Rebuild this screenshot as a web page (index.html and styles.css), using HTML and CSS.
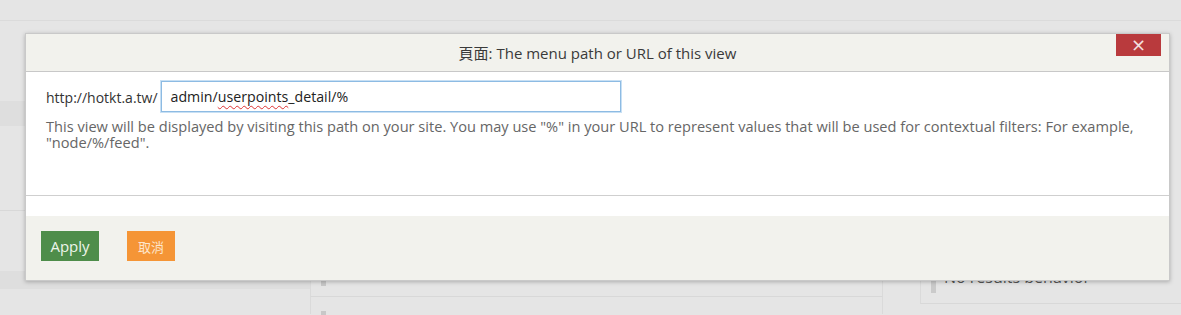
FILE: index.html
```html
<!DOCTYPE html>
<html lang="zh-Hant">
<head>
    <meta charset="UTF-8">
    <meta name="viewport" content="width=device-width, initial-scale=1.0">
    <title>Views UI</title>
    <link rel="stylesheet" href="styles.css">
</head>
<body>

<div class="page">
    <div class="page-top"></div>
    <div class="page-main">
        <div class="col-left">
            <div class="band band-1"></div>
            <div class="rule rule-1"></div>
            <div class="band band-2"></div>
        </div>
        <div class="col-mid">
            <div class="mid-row">
                <span class="handle"></span>
                <span class="mini-box"></span>
            </div>
            <div class="mid-row">
                <span class="handle"></span>
            </div>
        </div>
        <div class="col-gap"></div>
        <div class="col-right">
            <div class="right-row">
                <span class="bar"></span>
                <span class="right-title">No results behavior</span>
            </div>
        </div>
    </div>
</div>

<div class="dialog">
    <div class="dialog-header">
        <span class="dialog-title">頁面: The menu path or URL of this view</span>
        <button class="dialog-close" type="button">&times;</button>
    </div>
    <div class="dialog-content">
        <div class="form-row">
            <label class="field-prefix">http://hotkt.a.tw/</label>
            <div class="text-input">admin/<span class="misspelt">userpoints</span>_detail/%</div>
        </div>
        <p class="description">This view will be displayed by visiting this path on your site. You may use "%" in your URL to represent values that will be used for contextual filters: For example, "node/%/feed".</p>
    </div>
    <div class="dialog-spacer"></div>
    <div class="dialog-buttons">
        <button class="btn btn-apply" type="button">Apply</button>
        <button class="btn btn-cancel" type="button">取消</button>
    </div>
</div>

</body>
</html>
```

FILE: styles.css
```css
* {
    margin: 0;
    padding: 0;
    box-sizing: border-box;
}

html, body {
    height: 100%;
    overflow: hidden;
}

body {
    background-color: #e5e5e5;
    font-family: "Open Sans", "Noto Sans CJK TC", sans-serif;
    color: #333;
    position: relative;
}

/* page behind the dialog */
.page-top {
    height: 21px;
    border-bottom: 1px solid #dbdbdb;
}

.page-main {
    display: grid;
    grid-template-columns: 310px 573px 37px 1fr;
    height: 293px;
}

.col-left {
    padding-top: 80px;
}

.band {
    background-color: #dedede;
}

.band-1 {
    height: 25px;
}

.rule-1 {
    margin-top: 84px;
    border-top: 1px solid #d8d8d8;
}

.band-2 {
    margin-top: 60px;
    height: 18px;
}

.col-mid {
    padding-top: 240px;
}

.mid-row {
    position: relative;
    height: 36px;
    border-left: 1px solid #dadada;
    border-right: 1px solid #dadada;
    border-bottom: 1px solid #d8d8d8;
    padding: 20px 0 0 10px;
}

.mid-row + .mid-row {
    border-bottom: none;
    height: 17px;
    padding-top: 14px;
}

.handle {
    display: block;
    width: 5px;
    height: 5px;
    background-color: #c8c8c8;
}

.mini-box {
    position: absolute;
    left: 506px;
    top: 13px;
    width: 60px;
    height: 4px;
    border: 1px solid #c4c4c4;
    border-top: none;
}

.col-right {
    padding-top: 230px;
}

.right-row {
    height: 53px;
    border-left: 1px solid #dadada;
    border-bottom: 1px solid #d8d8d8;
    display: flex;
    align-items: flex-start;
    gap: 8px;
    padding-left: 10px;
}

.bar {
    width: 5px;
    height: 26px;
    margin-top: 16px;
    background-color: #cacaca;
}

.right-title {
    font-size: 16px;
    color: #555;
    line-height: 20px;
    margin-top: 16px;
}

/* dialog */
.dialog {
    position: absolute;
    left: 25px;
    top: 33px;
    width: 1145px;
    height: 248px;
    background-color: #f2f2ed;
    border: 1px solid #c9c9c9;
    box-shadow: 0 1px 4px rgba(0, 0, 0, 0.25);
    display: flex;
    flex-direction: column;
}

.dialog-header {
    position: relative;
    height: 38px;
    border-bottom: 1px solid #c8c8c8;
    display: flex;
    justify-content: center;
    align-items: center;
}

.dialog-title {
    font-size: 15px;
    color: #3a3a3a;
}

.dialog-close {
    position: absolute;
    top: 0;
    right: 8px;
    width: 45px;
    height: 22px;
    border: none;
    background-color: #b93a3d;
    color: #f3e0e0;
    font-family: "DejaVu Sans", sans-serif;
    font-size: 18px;
    line-height: 20px;
}

.dialog-content {
    background-color: #fff;
    height: 124px;
    border-bottom: 1px solid #cfcfcf;
    padding: 9px 20px 0 20px;
}

.form-row {
    display: flex;
    align-items: center;
    gap: 3px;
}

.field-prefix {
    font-size: 14px;
    color: #333;
    padding-top: 2px;
}

.text-input {
    width: 460px;
    height: 31px;
    border: 1px solid #8dbbe3;
    box-shadow: 0 0 0 1px #c8e0f4;
    padding: 5px 9px 0 9px;
    font-size: 14.2px;
    color: #222;
}

.misspelt {
    text-decoration: underline wavy #d33;
    text-decoration-thickness: 1px;
    text-underline-offset: 3px;
}

.description {
    margin-top: 6px;
    font-size: 14.6px;
    line-height: 16px;
    color: #666;
}

.dialog-spacer {
    height: 20px;
    background-color: #fff;
}

.dialog-buttons {
    flex: 1;
    display: flex;
    align-items: flex-start;
    gap: 28px;
    padding: 15px 0 0 15px;
}

.btn {
    height: 30px;
    border: none;
    font-family: "Open Sans", "Noto Sans CJK TC", sans-serif;
}

.btn-apply {
    width: 58px;
    background-color: #4e8d4a;
    color: #eef5ea;
    font-size: 15px;
}

.btn-cancel {
    width: 48px;
    background-color: #f59536;
    color: #fde6cc;
    font-size: 13px;
}
```
